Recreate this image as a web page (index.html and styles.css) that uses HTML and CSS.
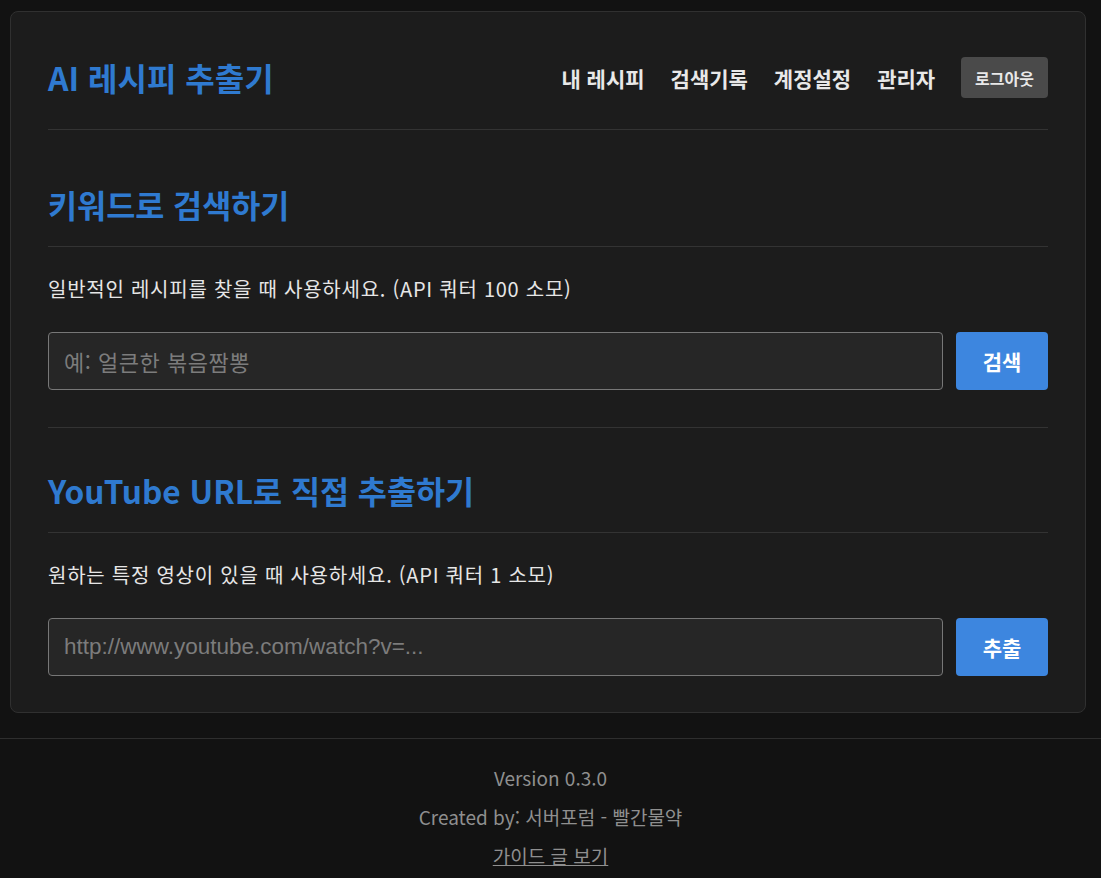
FILE: index.html
```html
<!DOCTYPE html>
<html lang="ko">
<head>
<meta charset="UTF-8">
<title>AI 레시피 추출기</title>
<link rel="stylesheet" href="styles.css">
</head>
<body>
<div class="container">
<header class="header">
<h1 class="logo">AI 레시피 추출기</h1>
<nav class="nav">
<a href="#">내 레시피</a>
<a href="#">검색기록</a>
<a href="#">계정설정</a>
<a href="#">관리자</a>
<button class="logout">로그아웃</button>
</nav>
</header>

<section class="section">
<h2>키워드로 검색하기</h2>
<p class="desc">일반적인 레시피를 찾을 때 사용하세요. (API 쿼터 100 소모)</p>
<form class="search-form">
<input type="text" class="ko" placeholder="예: 얼큰한 볶음짬뽕">
<button type="submit">검색</button>
</form>
</section>

<section class="section">
<h2>YouTube URL로 직접 추출하기</h2>
<p class="desc">원하는 특정 영상이 있을 때 사용하세요. (API 쿼터 1 소모)</p>
<form class="search-form">
<input type="text" placeholder="http://www.youtube.com/watch?v=...">
<button type="submit">추출</button>
</form>
</section>
</div>

<footer class="footer">
<p>Version 0.3.0</p>
<p>Created by: 서버포럼 - 빨간물약</p>
<p><a href="#">가이드 글 보기</a></p>
</footer>
</body>
</html>
```

FILE: styles.css
```css
body {
margin: 0;
background-color: #121212;
color: #e6e6e6;
font-family: "Noto Sans CJK KR", "Noto Sans", sans-serif;
}
.container {
margin: 11px 15px 0 10px;
background-color: #1c1c1c;
border: 1px solid #303030;
border-radius: 8px;
padding: 37px 37px 36px;
}
.header {
display: flex;
justify-content: space-between;
align-items: center;
padding: 8px 0 31px;
border-bottom: 1px solid #333;
}
.logo {
margin: 0;
font-size: 32px;
font-weight: 700;
color: #2f7ad0;
line-height: 41px;
}
.nav {
display: flex;
align-items: center;
gap: 26px;
}
.nav a {
color: #e8e8e8;
text-decoration: none;
font-weight: 700;
font-size: 21px;
}
.logout {
background-color: #4a4a4a;
color: #e8e8e8;
border: none;
border-radius: 4px;
height: 41px;
padding: 0 14px;
font-family: inherit;
font-size: 16px;
font-weight: 700;
}
.section {
padding: 56px 0 37px;
border-bottom: 1px solid #333;
}
.section + .section {
padding-top: 44px;
border-bottom: none;
padding-bottom: 0;
}
.section h2 {
margin: 0;
font-size: 31.6px;
font-weight: 700;
color: #2f7ad0;
line-height: 36px;
padding-bottom: 24px;
border-bottom: 1px solid #333;
}
.desc {
margin: 28px 0 30px;
font-size: 20px;
line-height: 27px;
letter-spacing: 0.75px;
color: #e6e6e6;
}
.search-form {
display: flex;
gap: 13px;
}
.search-form input {
flex: 1;
height: 58px;
box-sizing: border-box;
background-color: #262626;
border: 1px solid #777;
border-radius: 4px;
padding: 0 15px;
color: #e6e6e6;
font-family: "Liberation Sans", Arial, sans-serif;
font-size: 22.5px;
}
.search-form input.ko {
font-family: "Noto Sans CJK KR", sans-serif;
font-size: 22px;
letter-spacing: 0.5px;
}
.search-form input::placeholder {
color: #7c7c7c;
}
.search-form button {
width: 92px;
height: 58px;
background-color: #3d86df;
color: #fff;
border: none;
border-radius: 4px;
font-family: "Noto Sans CJK KR", sans-serif;
font-size: 21px;
font-weight: 700;
}
.footer {
margin-top: 25px;
border-top: 1px solid #2e2e2e;
text-align: center;
padding: 26px 0 0;
color: #8f8f8f;
font-size: 19px;
}
.footer p {
margin: 0 0 13px;
line-height: 26px;
}
.footer a {
color: #8f8f8f;
}
```
